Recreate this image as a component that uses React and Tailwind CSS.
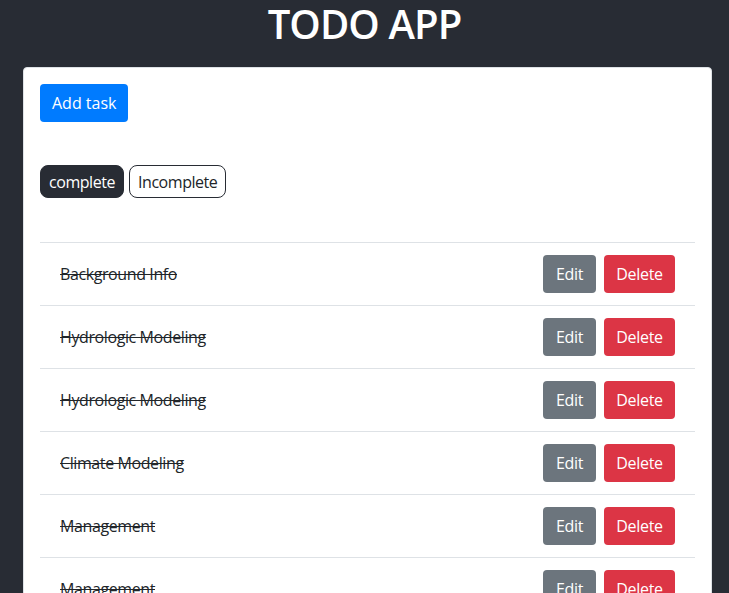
import React from "react";

const tasks = [
  "Background Info",
  "Hydrologic Modeling",
  "Hydrologic Modeling",
  "Climate Modeling",
  "Management",
  "Management",
  "Water Quality",
];

export default function App() {
  return (
    <div
      className="min-h-screen bg-[#282c34] text-[#212529]"
      style={{ fontFamily: '"Open Sans", "Noto Sans", sans-serif' }}
    >
      <h1 className="text-center text-white text-[40px] font-semibold leading-[48px] h-[67px] tracking-[-0.9px]">
        TODO APP
      </h1>

      <div className="ml-[23px] w-[689px] bg-white rounded border border-[#dee2e6] pt-4 px-4 pb-4">
        <button className="h-[38px] px-3 rounded bg-[#007bff] text-white text-base leading-6">
          Add task
        </button>

        <div className="flex gap-[5px] mt-[43px]">
          <button className="h-[33px] px-2 rounded-lg bg-[#282c34] border border-[#282c34] text-white text-base leading-6 tracking-[-0.45px]">
            complete
          </button>
          <button className="h-[33px] px-2 rounded-lg bg-white border border-[#282c34] text-[#212529] text-base leading-6 tracking-[-0.45px]">
            Incomplete
          </button>
        </div>

        <ul className="mt-[44px]">
          {tasks.map((t, i) => (
            <li
              key={i}
              className="flex items-center justify-between border-t border-[#dee2e6] px-5 py-3"
            >
              <span className="line-through text-base tracking-[-0.4px]">{t}</span>
              <div className="flex gap-2">
                <button className="h-[38px] w-[53px] rounded bg-[#6c757d] text-white text-base tracking-[-0.3px]">
                  Edit
                </button>
                <button className="h-[38px] w-[71px] rounded bg-[#dc3545] text-white text-base tracking-[-0.3px]">
                  Delete
                </button>
              </div>
            </li>
          ))}
        </ul>
      </div>
    </div>
  );
}
